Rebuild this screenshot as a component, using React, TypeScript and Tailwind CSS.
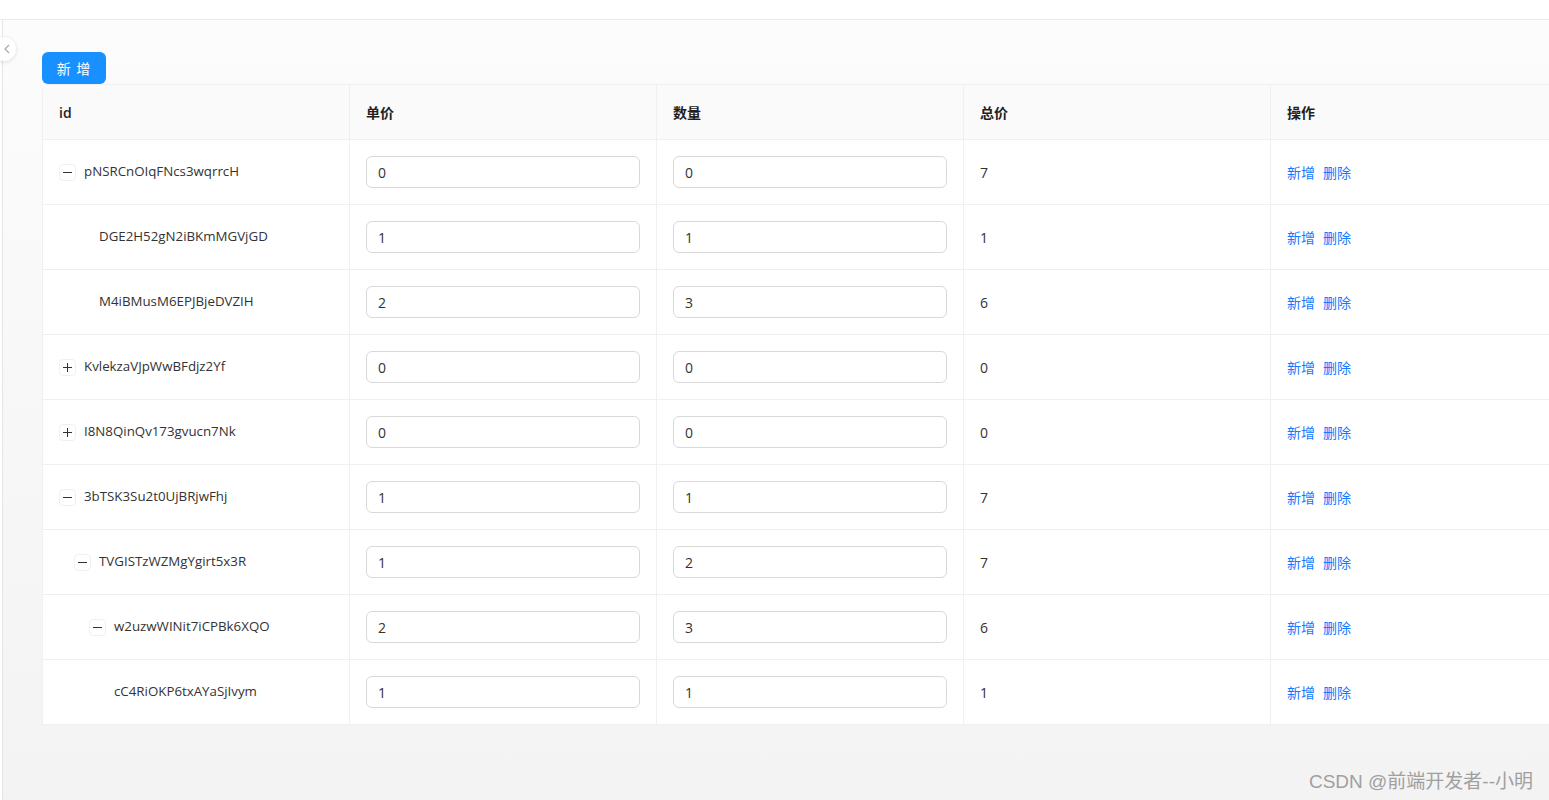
import React from "react";

type Row = { id: string; level: number; icon: "minus" | "plus" | "none"; price: string; qty: string; total: string };

const rows: Row[] = [
  { id: "pNSRCnOIqFNcs3wqrrcH", level: 0, icon: "minus", price: "0", qty: "0", total: "7" },
  { id: "DGE2H52gN2iBKmMGVjGD", level: 1, icon: "none", price: "1", qty: "1", total: "1" },
  { id: "M4iBMusM6EPJBjeDVZIH", level: 1, icon: "none", price: "2", qty: "3", total: "6" },
  { id: "KvlekzaVJpWwBFdjz2Yf", level: 0, icon: "plus", price: "0", qty: "0", total: "0" },
  { id: "I8N8QinQv173gvucn7Nk", level: 0, icon: "plus", price: "0", qty: "0", total: "0" },
  { id: "3bTSK3Su2t0UjBRjwFhj", level: 0, icon: "minus", price: "1", qty: "1", total: "7" },
  { id: "TVGISTzWZMgYgirt5x3R", level: 1, icon: "minus", price: "1", qty: "2", total: "7" },
  { id: "w2uzwWINit7iCPBk6XQO", level: 2, icon: "minus", price: "2", qty: "3", total: "6" },
  { id: "cC4RiOKP6txAYaSjIvym", level: 2, icon: "none", price: "1", qty: "1", total: "1" },
];

const indentClass = ["pl-0", "pl-[15px]", "pl-[30px]"];

function ExpandIcon({ kind }: { kind: "minus" | "plus" | "none" }) {
  if (kind === "none") return <span className="inline-block w-[17px] h-[17px] mr-[8px] shrink-0" />;
  return (
    <span className="relative inline-block w-[17px] h-[17px] mr-[8px] shrink-0 rounded-[4px] border border-[#f0f0f0] bg-white">
      <span className="absolute left-[3px] right-[3px] top-[7px] h-px bg-[#333]" />
      {kind === "plus" && <span className="absolute top-[3px] bottom-[3px] left-[7px] w-px bg-[#333]" />}
    </span>
  );
}

function Input({ value }: { value: string }) {
  return (
    <div className="w-full h-[32px] rounded-[6px] border border-[#d9d9d9] bg-white px-[11px] flex items-center text-[14px] text-[#333]">
      {value}
    </div>
  );
}

export default function App() {
  const cell = "border-r border-b border-[#f0f0f0] px-4 flex items-center";
  return (
    <div
      className="relative w-[1549px] h-[800px] overflow-hidden bg-white"
      style={{ fontFamily: '"Open Sans", "Noto Sans CJK SC", sans-serif' }}
    >
      <div className="h-[20px] bg-white border-b border-[#ebebeb]" />
      <div className="flex h-[780px]">
        <div className="w-[3px] border-r border-[#e6e6e6] bg-white shrink-0" />
        <div className="flex-1 bg-gradient-to-b from-[#fcfcfc] to-[#f3f3f3] pl-[39px] pt-[32px] overflow-hidden">
          <button className="w-[64px] h-[32px] rounded-[6px] bg-[#1890ff] text-white text-[14px] tracking-[1px] flex items-center justify-center relative z-10">
            新 增
          </button>
          <div className="w-[1535px] border-l border-t border-[#f0f0f0] rounded-tl-[8px] bg-white grid grid-cols-[repeat(5,307px)] text-[13.3px] text-[#333]">
            {["id", "单价", "数量", "总价", "操作"].map((h) => (
              <div key={h} className={`${cell} h-[55px] bg-[#fafafa] font-semibold text-[#1f1f1f] text-[14px]`}>
                {h}
              </div>
            ))}
            {rows.map((r) => (
              <React.Fragment key={r.id}>
                <div className={`${cell} h-[65px]`}>
                  <div className={`flex items-center ${indentClass[r.level]}`}>
                    <ExpandIcon kind={r.icon} />
                    <span>{r.id}</span>
                  </div>
                </div>
                <div className={`${cell} h-[65px]`}>
                  <Input value={r.price} />
                </div>
                <div className={`${cell} h-[65px]`}>
                  <Input value={r.qty} />
                </div>
                <div className={`${cell} h-[65px] text-[14px]`}>{r.total}</div>
                <div className={`${cell} h-[65px] gap-2 text-[#1677ff] text-[14px]`}>
                  <span>新增</span>
                  <span>删除</span>
                </div>
              </React.Fragment>
            ))}
          </div>
        </div>
      </div>
      <div className="absolute left-[-8px] top-[37px] w-[24px] h-[24px] rounded-full bg-white shadow-[0_1px_4px_rgba(0,0,0,0.12)] flex items-center justify-end pr-[6px]">
        <svg width="6" height="10" viewBox="0 0 6 10" fill="none">
          <path d="M5 1L1 5l4 4" stroke="#aaa" strokeWidth="1.2" />
        </svg>
      </div>
      <div
        className="absolute right-[16px] bottom-[9px] text-[19px] text-[#a0a0a0] leading-none"
        style={{ fontFamily: '"Liberation Sans", "Noto Sans CJK SC", sans-serif' }}
      >
        CSDN @前端开发者--小明
      </div>
    </div>
  );
}
